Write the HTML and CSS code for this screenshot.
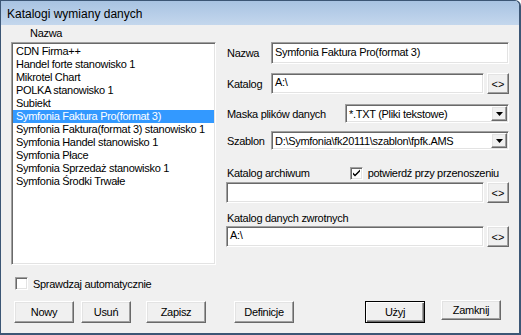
FILE: index.html
```html
<!DOCTYPE html>
<html lang="pl">
<head>
    <meta charset="utf-8">
    <title>Katalogi wymiany danych</title>
    <link rel="stylesheet" href="styles.css">
</head>
<body>
    <div class="okno">
        <div class="pasek">Katalogi wymiany danych</div>
        <div class="klient">
            <div class="gora">
                <div class="lewa">
                    <div class="naglowek">Nazwa</div>
                    <ul class="lista">
                        <li>CDN Firma++</li>
                        <li>Handel forte stanowisko 1</li>
                        <li>Mikrotel Chart</li>
                        <li>POLKA stanowisko 1</li>
                        <li>Subiekt</li>
                        <li class="wybrany">Symfonia Faktura Pro(format 3)</li>
                        <li>Symfonia Faktura(format 3) stanowisko 1</li>
                        <li>Symfonia Handel stanowisko 1</li>
                        <li>Symfonia Płace</li>
                        <li>Symfonia Sprzedaż stanowisko 1</li>
                        <li>Symfonia Środki Trwałe</li>
                    </ul>
                </div>
                <div class="formularz">
                    <div class="wiersz w-nazwa">
                        <span class="etykieta krotka">Nazwa</span>
                        <div class="pole">Symfonia Faktura Pro(format 3)</div>
                    </div>
                    <div class="wiersz w-katalog">
                        <span class="etykieta krotka">Katalog</span>
                        <div class="pole">A:\</div>
                        <button class="przegladaj">&lt;&gt;</button>
                    </div>
                    <div class="wiersz w-maska">
                        <span class="etykieta dluga">Maska plików danych</span>
                        <div class="lista-rozw">
                            <span class="tekst">*.TXT (Pliki tekstowe)</span>
                            <span class="strzalka"><svg width="7" height="4" viewBox="0 0 7 4"><path d="M0 0h7L3.5 4z" fill="#000"/></svg></span>
                        </div>
                    </div>
                    <div class="wiersz w-szablon">
                        <span class="etykieta krotka">Szablon</span>
                        <div class="lista-rozw">
                            <span class="tekst">D:\Symfonia\fk20111\szablon\fpfk.AMS</span>
                            <span class="strzalka"><svg width="7" height="4" viewBox="0 0 7 4"><path d="M0 0h7L3.5 4z" fill="#000"/></svg></span>
                        </div>
                    </div>
                    <div class="wiersz w-archiwum">
                        <span class="etykieta">Katalog archiwum</span>
                        <label class="zaznacz">
                            <span class="kratka"><svg width="9" height="9" viewBox="0 0 9 9"><path d="M1 3.5l2 2 5-5v2l-5 5-2-2z" fill="#000"/></svg></span>
                            potwierdź przy przenoszeniu
                        </label>
                    </div>
                    <div class="wiersz w-pole-arch">
                        <div class="pole"></div>
                        <button class="przegladaj">&lt;&gt;</button>
                    </div>
                    <div class="wiersz w-zwrot-etyk">
                        <span class="etykieta">Katalog danych zwrotnych</span>
                    </div>
                    <div class="wiersz w-zwrot">
                        <div class="pole">A:\</div>
                        <button class="przegladaj">&lt;&gt;</button>
                    </div>
                </div>
            </div>
            <label class="auto">
                <span class="kratka"></span>
                Sprawdzaj automatycznie
            </label>
            <div class="przyciski">
                <button class="btn b-nowy">Nowy</button>
                <button class="btn b-usun">Usuń</button>
                <button class="btn b-zapisz">Zapisz</button>
                <button class="btn b-def">Definicje</button>
                <button class="btn b-uzyj domyslny">Użyj</button>
                <button class="btn b-zamknij">Zamknij</button>
            </div>
        </div>
    </div>
</body>
</html>
```

FILE: styles.css
```css
body {
    margin: 0;
    padding: 0;
    background-color: #ffffff;
    font-family: "Liberation Sans", Arial, sans-serif;
    font-size: 11px;
    letter-spacing: -0.3px;
    color: #000;
}

.okno {
    width: 521px;
    height: 335px;
    box-sizing: border-box;
    border: 1px solid #3c5675;
    border-right-width: 2px;
    border-bottom-width: 2px;
    border-radius: 0 6px 0 0;
    background-color: #f0f0f0;
    overflow: hidden;
}

.pasek {
    height: 24px;
    box-sizing: border-box;
    padding: 3px 0 0 6px;
    line-height: 20px;
    font-size: 12px;
    letter-spacing: 0;
    background: linear-gradient(#a8c3e2, #c4d7ed);
    color: #000;
}

.klient {
    padding-left: 10px;
}

.gora {
    display: flex;
}

.lewa {
    width: 205px;
}

.naglowek {
    height: 17px;
    box-sizing: border-box;
    padding: 2px 0 0 19px;
    line-height: 13px;
}

.lista {
    margin: 0;
    padding: 2px 1px 0 1px;
    list-style: none;
    height: 223px;
    box-sizing: border-box;
    background-color: #fff;
    border: 1px solid;
    border-color: #a0a0a0 #fff #fff #a0a0a0;
    box-shadow: inset 1px 1px 0 #696969, inset -1px -1px 0 #e3e3e3;
}

.lista li {
    height: 13px;
    line-height: 13px;
    padding-left: 3px;
    white-space: nowrap;
}

.lista li.wybrany {
    background-color: #3399ff;
    color: #fff;
}

.formularz {
    margin-left: 10px;
    width: 283px;
    padding-top: 17px;
    display: flex;
    flex-direction: column;
}

.wiersz {
    display: flex;
    align-items: center;
}

.etykieta {
    padding-left: 1px;
    white-space: nowrap;
}

.krotka {
    width: 44px;
}

.dluga {
    width: 118px;
}

.pole {
    flex: 1;
    box-sizing: border-box;
    height: 21px;
    line-height: 17px;
    padding-left: 3px;
    background-color: #fff;
    border: 1px solid;
    border-color: #a0a0a0 #fff #fff #a0a0a0;
    box-shadow: inset 1px 1px 0 #696969, inset -1px -1px 0 #e3e3e3;
    white-space: nowrap;
}

.w-nazwa .pole {
    height: 22px;
    line-height: 18px;
}

.przegladaj {
    width: 22px;
    height: 21px;
    margin-left: 3px;
    padding: 0;
    font-family: "Liberation Sans", Arial, sans-serif;
    font-size: 11px;
    background-color: #f0f0f0;
    border: 1px solid;
    border-color: #fff #696969 #696969 #fff;
    box-shadow: inset -1px -1px 0 #a0a0a0, inset 1px 1px 0 #e3e3e3;
}

.w-katalog {
    margin-top: 9px;
}

.w-maska {
    margin-top: 10px;
}

.w-szablon {
    margin-top: 8px;
}

.lista-rozw {
    flex: 1;
    display: flex;
    align-items: center;
    box-sizing: border-box;
    height: 19px;
    padding: 0 1px 0 3px;
    background-color: #fff;
    border: 1px solid;
    border-color: #a0a0a0 #fff #fff #a0a0a0;
    box-shadow: inset 1px 1px 0 #696969, inset -1px -1px 0 #e3e3e3;
    white-space: nowrap;
}

.lista-rozw .tekst {
    flex: 1;
}

.strzalka {
    width: 16px;
    height: 15px;
    box-sizing: border-box;
    display: flex;
    align-items: center;
    justify-content: center;
    background-color: #f0f0f0;
    border: 1px solid;
    border-color: #fff #696969 #696969 #fff;
    box-shadow: inset -1px -1px 0 #a0a0a0, inset 1px 1px 0 #e3e3e3;
}

.w-archiwum {
    margin-top: 16px;
    height: 14px;
}

.zaznacz {
    display: flex;
    align-items: center;
    margin-left: 40px;
    white-space: nowrap;
}

.kratka {
    width: 13px;
    height: 13px;
    box-sizing: border-box;
    display: flex;
    align-items: center;
    justify-content: center;
    margin-right: 5px;
    background-color: #fff;
    border: 1px solid;
    border-color: #a0a0a0 #fff #fff #a0a0a0;
    box-shadow: inset 1px 1px 0 #696969, inset -1px -1px 0 #e3e3e3;
}

.w-pole-arch {
    margin-top: 2px;
}

.w-zwrot-etyk {
    margin-top: 8px;
    height: 14px;
}

.w-zwrot {
    margin-top: 1px;
}

.auto {
    display: flex;
    align-items: center;
    margin-top: 12px;
    margin-left: 4px;
    height: 13px;
}

.przyciski {
    display: flex;
    margin-top: 11px;
}

.btn {
    height: 22px;
    width: 60px;
    padding: 0;
    font-family: "Liberation Sans", Arial, sans-serif;
    font-size: 11px;
    letter-spacing: -0.3px;
    background-color: #f0f0f0;
    border: 1px solid;
    border-color: #fff #696969 #696969 #fff;
    box-shadow: inset -1px -1px 0 #a0a0a0, inset 1px 1px 0 #e3e3e3;
}

.b-nowy {
    margin-left: 3px;
}

.b-usun {
    width: 50px;
    margin-left: 7px;
}

.b-zapisz {
    margin-left: 15px;
}

.b-def {
    margin-left: 28px;
}

.b-uzyj {
    margin-left: 71px;
}

.domyslny {
    border-color: #000;
    box-shadow: inset 1px 1px 0 #fff, inset -1px -1px 0 #696969, inset -2px -2px 0 #a0a0a0;
}

.b-zamknij {
    margin-left: 16px;
    height: 20px;
    margin-top: -1px;
}
```
